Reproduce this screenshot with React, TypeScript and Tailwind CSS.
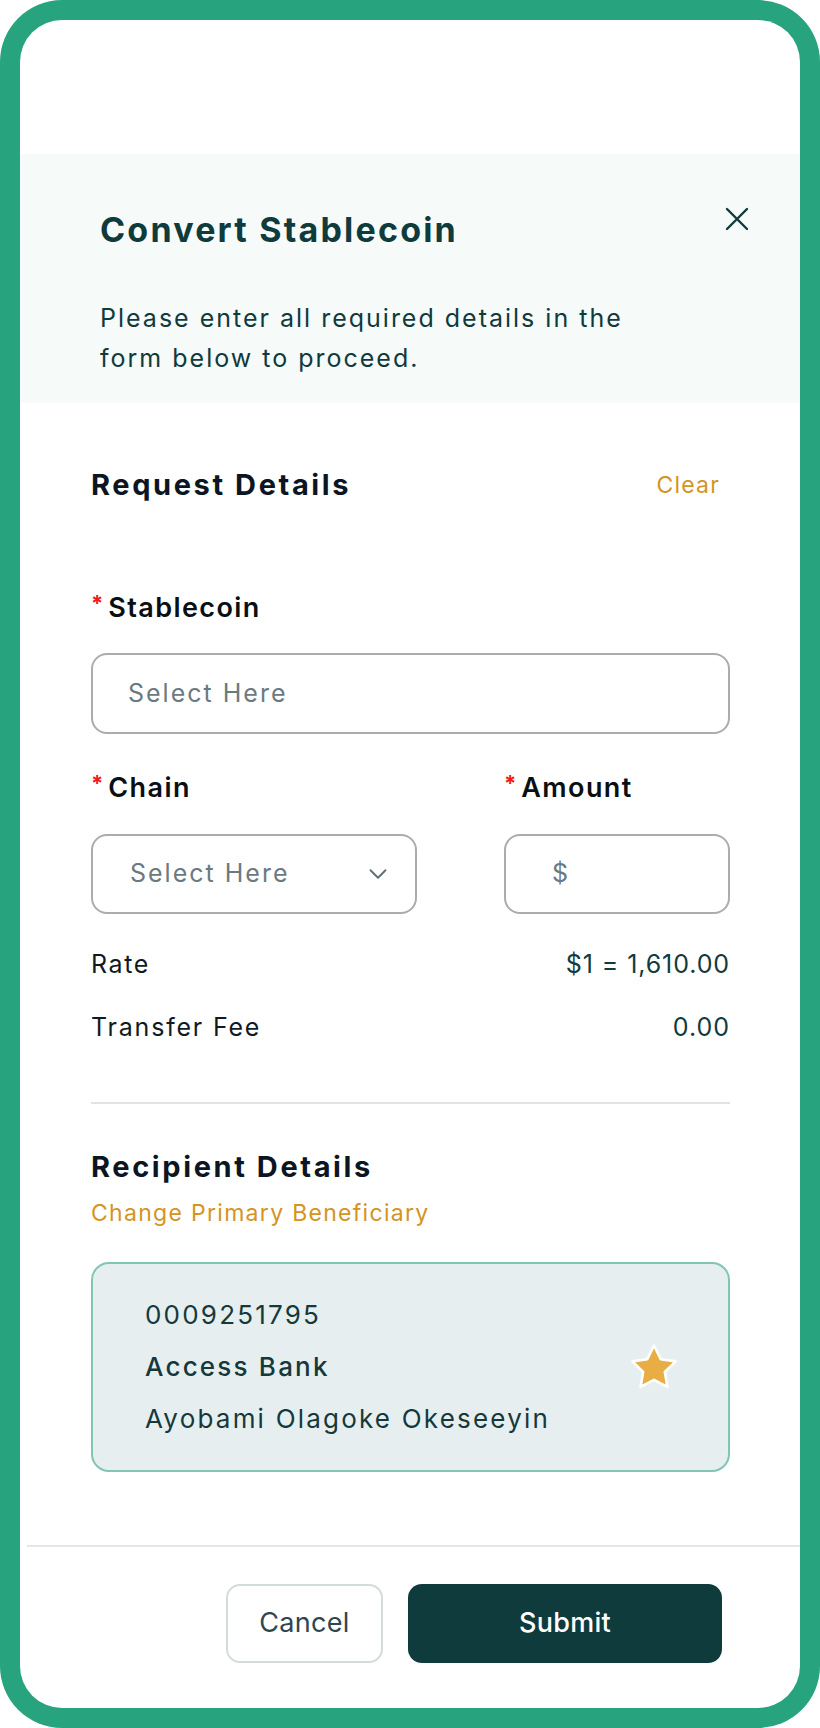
import { ChevronDown } from "lucide-react";

const font = "font-['Inter','Noto_Sans',sans-serif]";

function Label({ text }: { text: string }) {
    return (
        <div className="flex items-start h-[36px]">
            <span className="text-[#F01B1B] text-[22px] leading-[26px] font-bold mr-[5px]">*</span>
            <span className="text-[27px] leading-[36px] font-semibold text-[#0A0F14] tracking-[1.4px]">{text}</span>
        </div>
    );
}

function Star() {
    return (
        <svg width="52" height="50" viewBox="0 0 24 23">
            <path
                d="M12 1.6l3.1 6.3 6.9 1-5 4.9 1.2 6.9L12 17.4l-6.2 3.3L7 13.8 2 8.9l6.9-1z"
                fill="#E8AD45"
                stroke="#FFFFFF"
                strokeWidth="1.2"
                strokeLinejoin="round"
            />
        </svg>
    );
}

export default function App() {
    return (
        <div className={`w-[820px] h-[1728px] bg-white ${font}`}>
            <div className="w-full h-full bg-[#27A37D] rounded-[62px] p-[20px]">
                <div className="w-full h-full bg-white rounded-[42px] flex flex-col overflow-hidden">
                    {/* top blank */}
                    <div className="h-[134px] shrink-0" />

                    {/* Header */}
                    <div className="h-[249px] shrink-0 bg-[#F6FAF9] pl-[80px] pr-[51px] pt-[56px]">
                        <div className="flex items-center justify-between h-[40px]">
                            <h1 className="text-[34px] leading-[40px] font-bold text-[#0F3B3D] tracking-[2.2px]">
                                Convert Stablecoin
                            </h1>
                            <svg width="24" height="24" viewBox="0 0 24 24" className="-mt-[22px]">
                                <path d="M2 2l20 20M22 2L2 22" stroke="#0F3B3D" strokeWidth="2.4" strokeLinecap="round" />
                            </svg>
                        </div>
                        <p className="mt-[48px] text-[25px] leading-[40px] text-[#0F3B3D] tracking-[2px] w-[570px]">
                            Please enter all required details in the form below to proceed.
                        </p>
                    </div>

                    {/* Body */}
                    <div className="flex-1 pl-[71px] pr-[70px] pt-[64px]">
                        <div className="flex items-center justify-between h-[36px]">
                            <h2 className="text-[29px] leading-[36px] font-bold text-[#0C1622] tracking-[2.6px]">Request Details</h2>
                            <button className="text-[23px] text-[#D4941E] tracking-[1.2px] mr-[10px]">Clear</button>
                        </div>

                        <div className="mt-[87px]">
                            <Label text="Stablecoin" />
                            <div className="mt-[27px] h-[81px] border-2 border-[#A9ADAD] rounded-[16px] flex items-center pl-[35px]">
                                <span className="text-[25px] text-[#6B7A80] tracking-[2px]">Select Here</span>
                            </div>
                        </div>

                        <div className="mt-[36px] flex justify-between">
                            <div className="w-[326px]">
                                <Label text="Chain" />
                                <div className="mt-[28px] h-[80px] border-2 border-[#A9ADAD] rounded-[16px] flex items-center justify-between pl-[37px] pr-[22px]">
                                    <span className="text-[25px] text-[#6B7A80] tracking-[2px]">Select Here</span>
                                    <ChevronDown className="w-[30px] h-[30px] text-[#5F7075]" strokeWidth={1.5} />
                                </div>
                            </div>
                            <div className="w-[226px]">
                                <Label text="Amount" />
                                <div className="mt-[28px] h-[80px] border-2 border-[#A9ADAD] rounded-[16px] flex items-center pl-[46px]">
                                    <span className="text-[25px] text-[#6B7A80]">$</span>
                                </div>
                            </div>
                        </div>

                        <div className="mt-[33px] flex items-center justify-between h-[36px] text-[25px]">
                            <span className="text-[#111A1F] tracking-[1.6px]">Rate</span>
                            <span className="text-[#123B3D] tracking-[0.9px]">$1 = 1,610.00</span>
                        </div>
                        <div className="mt-[27px] flex items-center justify-between h-[36px] text-[25px]">
                            <span className="text-[#111A1F] tracking-[1.8px]">Transfer Fee</span>
                            <span className="text-[#123B3D] tracking-[1px]">0.00</span>
                        </div>

                        <div className="mt-[56px] h-[2px] bg-[#E1E4E6]" />

                        <h2 className="mt-[45px] text-[29px] leading-[36px] font-bold text-[#0C1622] tracking-[2.6px]">Recipient Details</h2>
                        <p className="mt-[13px] text-[23px] leading-[30px] text-[#D4941E] tracking-[1.3px]">Change Primary Beneficiary</p>

                        <div className="mt-[34px] h-[210px] bg-[#E6EEF0] border-2 border-[#82C6B2] rounded-[18px] flex items-center justify-between pl-[52px] pr-[48px]">
                            <div className="flex flex-col gap-[16px] text-[26px] leading-[36px] text-[#15393B] tracking-[2.2px]">
                                <span>0009251795</span>
                                <span className="font-medium">Access Bank</span>
                                <span>Ayobami Olagoke Okeseeyin</span>
                            </div>
                            <Star />
                        </div>
                    </div>

                    {/* Footer */}
                    <div className="shrink-0 ml-[7px] border-t-2 border-[#E3E7E9] pt-[37px] pb-[45px] pr-[78px] flex justify-end gap-[25px]">
                        <button className="w-[157px] h-[79px] border-2 border-[#D5DADC] rounded-[14px] text-[27px] text-[#2F4550] tracking-[0.3px]">
                            Cancel
                        </button>
                        <button className="w-[314px] h-[79px] bg-[#0F3B3D] rounded-[14px] text-[27px] text-white font-medium tracking-[0.3px]">
                            Submit
                        </button>
                    </div>
                </div>
            </div>
        </div>
    );
}
